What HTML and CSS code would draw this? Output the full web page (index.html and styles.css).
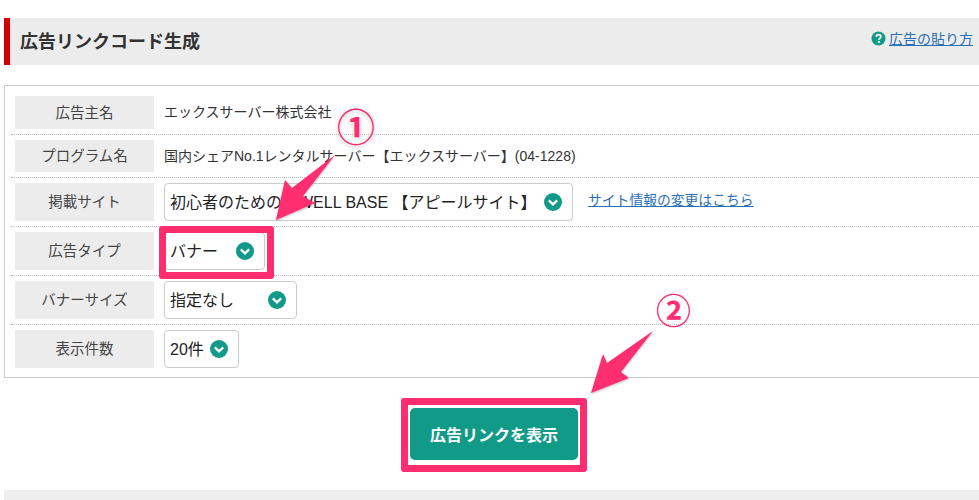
FILE: index.html
```html
<!DOCTYPE html>
<html lang="ja">
<head>
  <meta charset="UTF-8">
  <title>広告リンクコード生成</title>
  <link rel="stylesheet" href="styles.css">
</head>
<body>

  <div class="page-head">
    <h2>広告リンクコード生成</h2>
    <a class="help-link" href="#">
      <svg class="help-icon" viewBox="0 0 16 16"><circle cx="8" cy="8" r="7.5" fill="#129a88"/><path d="M5.6 6.2c0-1.4 1-2.3 2.5-2.3s2.4.9 2.4 2.1c0 1.9-2.1 1.8-2.1 3.4" fill="none" stroke="#fff" stroke-width="1.9"/><rect x="7.4" y="10.6" width="2" height="2" fill="#fff"/></svg>
      <span>広告の貼り方</span>
    </a>
  </div>

  <div class="form-box">
    <div class="form-row row-advertiser">
      <div class="form-label">広告主名</div>
      <div class="form-value">エックスサーバー株式会社</div>
    </div>
    <div class="form-row row-program">
      <div class="form-label">プログラム名</div>
      <div class="form-value">国内シェアNo.1レンタルサーバー【エックスサーバー】(04-1228)</div>
    </div>
    <div class="form-row">
      <div class="form-label">掲載サイト</div>
      <div class="select site-select">
        <span>初心者のための　WELL BASE 【アピールサイト】</span>
        <svg class="chevron" viewBox="0 0 18 18"><circle cx="9" cy="9" r="9"/><path d="M4.8 7.4 9 11.4l4.2-4"/></svg>
      </div>
      <a class="site-link" href="#">サイト情報の変更はこちら</a>
    </div>
    <div class="form-row">
      <div class="form-label">広告タイプ</div>
      <div class="select type-select">
        <span>バナー</span>
        <svg class="chevron" viewBox="0 0 18 18"><circle cx="9" cy="9" r="9"/><path d="M4.8 7.4 9 11.4l4.2-4"/></svg>
      </div>
    </div>
    <div class="form-row">
      <div class="form-label">バナーサイズ</div>
      <div class="select size-select">
        <span>指定なし</span>
        <svg class="chevron" viewBox="0 0 18 18"><circle cx="9" cy="9" r="9"/><path d="M4.8 7.4 9 11.4l4.2-4"/></svg>
      </div>
    </div>
    <div class="form-row">
      <div class="form-label">表示件数</div>
      <div class="select count-select">
        <span>20件</span>
        <svg class="chevron" viewBox="0 0 18 18"><circle cx="9" cy="9" r="9"/><path d="M4.8 7.4 9 11.4l4.2-4"/></svg>
      </div>
    </div>
  </div>

  <div class="button-wrap">
    <button class="show-button">広告リンクを表示</button>
  </div>

  <div class="next-head"></div>

  <!-- annotations drawn on top of the screenshot -->
  <div class="mark mark-type"></div>
  <div class="mark mark-button"></div>
  <svg class="arrows" width="979" height="500" viewBox="0 0 979 500">
    <defs>
      <filter id="soft" x="-20%" y="-20%" width="140%" height="140%">
        <feDropShadow dx="0" dy="1" stdDeviation="1.2" flood-color="#000" flood-opacity="0.3"/>
      </filter>
    </defs>
    <path filter="url(#soft)" fill="#ff2d6f" d="M335 155 L292 188 L285 180 L276 220 L315 203 L303 196 Z"/>
    <path filter="url(#soft)" fill="#ff2d6f" d="M653 331 L607 363 L603 354 L591 393 L629 378 L621 372 Z"/>
  </svg>
  <span class="num num-one">①</span>
  <span class="num num-two">②</span>

</body>
</html>
```

FILE: styles.css
```css
html {
  overflow: hidden;
}

body {
  margin: 0;
  padding: 18px 0 0 4px;
  width: 975px;
  height: 482px;
  overflow: hidden;
  background-color: #fff;
  color: #333;
  font-family: "Liberation Sans", "Noto Sans CJK JP", sans-serif;
  position: relative;
}

.page-head {
  height: 47px;
  display: flex;
  align-items: center;
  justify-content: space-between;
  background-color: #ececec;
  border-left: 6px solid #d40000;
  padding: 0 6px 0 10px;
}

.page-head h2 {
  margin: -4px 0 0;
  font-size: 18px;
  font-weight: bold;
  color: #333;
}

.help-link {
  display: flex;
  align-items: center;
  gap: 3px;
  margin-top: -7px;
  font-size: 14px;
  color: #2a6fb5;
}

.help-icon {
  width: 15px;
  height: 15px;
}

.form-box {
  margin-top: 20px;
  height: 281px;
  border: 1px solid #ccc;
  border-right: none;
  padding: 10px 0 0 6px;
}

.form-row {
  height: 38px;
  display: flex;
  align-items: center;
  padding: 0 0 5px 4px;
  margin-bottom: 5px;
  border-bottom: 1px dotted #bbb;
}

.form-row.row-advertiser {
  height: 33px;
}

.form-row.row-program {
  height: 32px;
}

.form-row:last-child {
  border-bottom: none;
}

.form-label {
  width: 139px;
  height: 100%;
  box-sizing: border-box;
  padding-bottom: 3px;
  display: flex;
  align-items: center;
  justify-content: center;
  background-color: #ececec;
  font-size: 14.5px;
  color: #444;
  flex-shrink: 0;
}

.form-value {
  margin-left: 10px;
  margin-top: -3px;
  font-size: 14px;
  color: #333;
  white-space: nowrap;
}

.select {
  margin-left: 10px;
  height: 38px;
  box-sizing: border-box;
  display: flex;
  align-items: center;
  justify-content: space-between;
  padding: 0 10px 0 5px;
  background-color: #fff;
  border: 1px solid #ccc;
  border-radius: 4px;
  font-size: 16px;
  color: #222;
  white-space: nowrap;
}

.select span {
  margin-top: -3px;
}

.site-select { width: 409px; }
.type-select { width: 101px; }
.size-select { width: 133px; }
.count-select { width: 75px; }

.chevron {
  width: 18px;
  height: 18px;
  flex-shrink: 0;
}

.chevron circle {
  fill: #129a88;
}

.chevron path {
  fill: none;
  stroke: #fff;
  stroke-width: 2.2;
}

.site-link {
  margin-left: 15px;
  margin-top: -6px;
  font-size: 13.8px;
  color: #2a6fb5;
}

.button-wrap {
  margin-top: 30px;
  display: flex;
  justify-content: center;
  padding-left: 5px;
}

.show-button {
  width: 168px;
  height: 52px;
  border: none;
  border-radius: 5px;
  background-color: #129a88;
  color: #fff;
  font-family: inherit;
  font-size: 16px;
  font-weight: bold;
  padding-bottom: 2px;
}

.next-head {
  margin-top: 30px;
  height: 20px;
  background-color: #eee;
}

.mark {
  position: absolute;
  box-sizing: border-box;
  border: 7px solid #ff2d6f;
  border-radius: 3px;
}

.mark-type {
  left: 159px;
  top: 226px;
  width: 115px;
  height: 53px;
}

.mark-button {
  left: 401px;
  top: 398px;
  width: 186px;
  height: 74px;
}

.arrows {
  position: absolute;
  left: 0;
  top: 0;
}

.num {
  position: absolute;
  line-height: 1;
  font-weight: bold;
  color: #ff2d6f;
}

.num-one {
  left: 337px;
  top: 109px;
  font-size: 38px;
  text-shadow: 0 0 3px #fff, 0 0 3px #fff, 0 1px 4px rgba(0, 0, 0, 0.35);
}

.num-two {
  left: 656px;
  top: 294px;
  font-size: 35px;
}
```
